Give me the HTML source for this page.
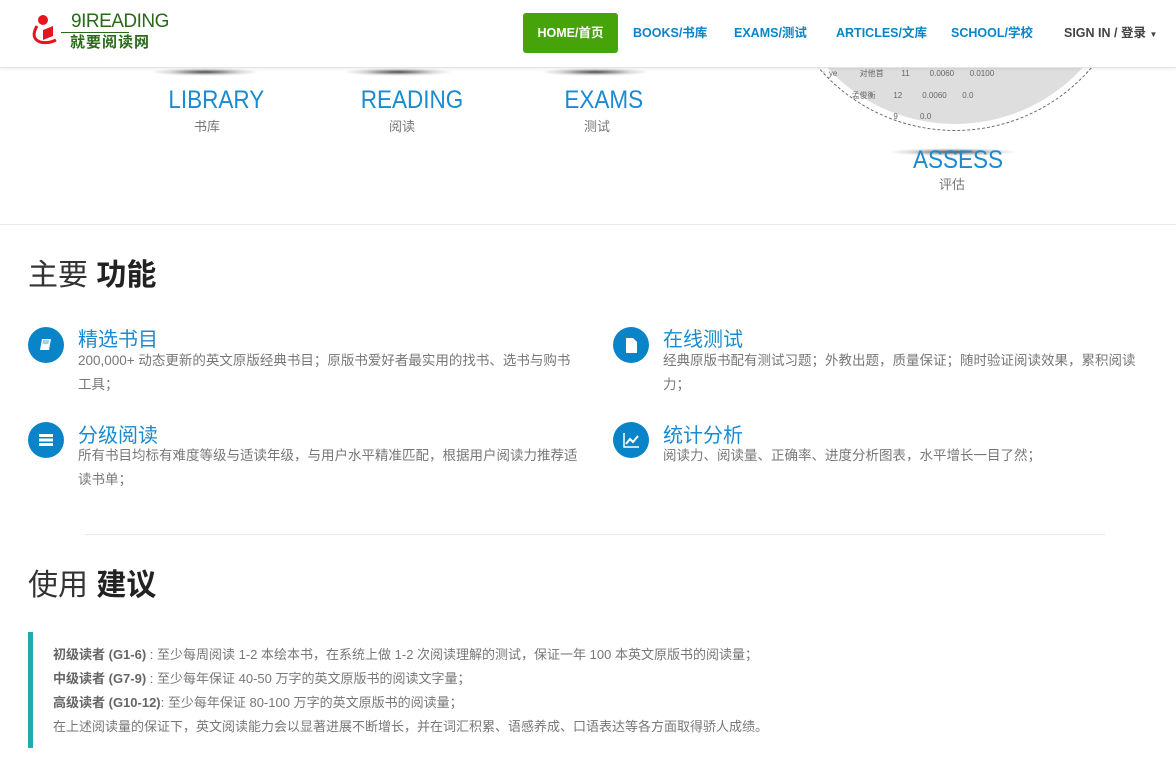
<!DOCTYPE html>
<html><head><meta charset="utf-8"><style>
*{margin:0;padding:0;box-sizing:border-box}
body{width:1176px;height:779px;overflow:hidden;background:#fff;font-family:"Liberation Sans","Noto Sans CJK SC",sans-serif;color:#666;position:relative}
.nav{position:absolute;top:0;left:0;width:1176px;height:68px;background:#fff;border-bottom:1px solid #e4e4e4;box-shadow:0 1px 3px rgba(0,0,0,.08);z-index:5}
.nav a{position:absolute;top:13px;height:40px;line-height:40px;font-size:12.5px;font-weight:bold;color:#0a84c8;text-decoration:none}
.hand{position:absolute;font-family:"Liberation Sans Narrow","Liberation Sans",sans-serif;color:#1a8bd0;font-size:25px;font-weight:normal;transform:scaleX(.9);transform-origin:center}
.sub{position:absolute;font-size:13px;color:#777;width:80px;text-align:center}
.shadow{position:absolute;height:8px;border-radius:50%;background:radial-gradient(ellipse at center,rgba(0,0,0,.7) 0%,rgba(0,0,0,.15) 45%,rgba(0,0,0,0) 70%)}
h2{position:absolute;left:28px;font-size:30px;font-weight:normal;color:#333}
h2 b{color:#222}
.ic{position:absolute;width:36px;height:36px;border-radius:50%;background:#0a84c8}
.ft{position:absolute;font-size:20px;color:#1a8bd0}
.fd{position:absolute;font-size:13.5px;line-height:24px;color:#777}
</style></head><body>
<div class="nav">
 <svg style="position:absolute;left:30px;top:14px" width="30" height="34" viewBox="0 0 30 34"><circle cx="13" cy="6" r="5" fill="#e8141c"/><path d="M7 12 Q0 24 10 28 Q18 30 26 26" stroke="#e8141c" stroke-width="3" fill="none"/><path d="M13 16 L23 12 L23 22 L13 26Z" fill="#e8141c"/></svg>
 <div style="position:absolute;left:71px;top:11px;font-family:'Liberation Sans Narrow','Liberation Sans',sans-serif;font-size:19px;color:#2a6a1a;letter-spacing:-0.5px">9IREADING</div>
 <div style="position:absolute;left:61px;top:32px;width:68px;border-top:1px solid #2a6a1a"></div>
 <div style="position:absolute;left:70px;top:31px;font-size:15px;font-weight:bold;color:#2a6a1a;letter-spacing:1px">就要阅读网</div>
 <a style="left:523px;width:95px;background:#46a30a;color:#fff;border-radius:3px;text-align:center">HOME/首页</a>
 <a style="left:633px">BOOKS/书库</a>
 <a style="left:734px">EXAMS/测试</a>
 <a style="left:836px">ARTICLES/文库</a>
 <a style="left:951px">SCHOOL/学校</a>
 <a style="left:1064px;color:#444">SIGN IN / 登录 <span style="font-size:8px">▼</span></a>
</div>
<div style="position:absolute;left:775px;top:-229px;width:360px;height:360px;border-radius:50%;border:1px dashed #666;overflow:hidden">
 <div style="position:absolute;left:6px;top:6px;width:346px;height:346px;border-radius:50%;background:#dedede"></div>
 <div style="position:absolute;left:40px;top:296px;font-size:8px;color:#666;white-space:pre">dy_ye          对他首        11         0.0060       0.0100</div>
 <div style="position:absolute;left:40px;top:318px;font-size:8px;color:#666;white-space:pre">                孟俊衡        12         0.0060       0.0</div>
 <div style="position:absolute;left:40px;top:339px;font-size:8px;color:#666;white-space:pre">                陈加府        9          0.0</div>
</div>
<div class="shadow" style="left:150px;top:68px;width:110px"></div>
<div class="shadow" style="left:343px;top:68px;width:110px"></div>
<div class="shadow" style="left:540px;top:68px;width:110px"></div>
<div class="shadow" style="left:888px;top:148px;width:130px"></div>
<div class="hand" style="left:163px;top:86px">LIBRARY</div>
<div class="sub" style="left:167px;top:116px">书库</div>
<div class="hand" style="left:355px;top:86px">READING</div>
<div class="sub" style="left:362px;top:116px">阅读</div>
<div class="hand" style="left:560px;top:86px">EXAMS</div>
<div class="sub" style="left:557px;top:116px">测试</div>
<div class="hand" style="left:908px;top:146px">ASSESS</div>
<div class="sub" style="left:912px;top:174px">评估</div>
<div style="position:absolute;left:0;top:224px;width:1176px;border-top:1px solid #e8e8e8"></div>
<h2 style="top:250px">主要 <b>功能</b></h2>
<div class="ic" style="left:28px;top:327px"><svg width="36" height="36"><path d="M14 12h9l-2 11h-9z" fill="#fff"/><path d="M15 14h6M14.5 16h6" stroke="#0a84c8" stroke-width=".8"/></svg></div>
<div class="ft" style="left:78px;top:323px">精选书目</div>
<div class="fd" style="left:78px;top:349px;width:505px">200,000+ 动态更新的英文原版经典书目；原版书爱好者最实用的找书、选书与购书工具；</div>
<div class="ic" style="left:28px;top:422px"><svg width="36" height="36"><rect x="11" y="12" width="14" height="3" fill="#fff"/><rect x="11" y="16.5" width="14" height="3" fill="#fff"/><rect x="11" y="21" width="14" height="3" fill="#fff"/></svg></div>
<div class="ft" style="left:78px;top:419px">分级阅读</div>
<div class="fd" style="left:78px;top:444px;width:505px">所有书目均标有难度等级与适读年级，与用户水平精准匹配，根据用户阅读力推荐适读书单；</div>
<div class="ic" style="left:613px;top:327px"><svg width="36" height="36"><path d="M13 11h7l4 4v11h-11z" fill="#fff"/></svg></div>
<div class="ft" style="left:663px;top:323px">在线测试</div>
<div class="fd" style="left:663px;top:349px;width:492px">经典原版书配有测试习题；外教出题，质量保证；随时验证阅读效果，累积阅读力；</div>
<div class="ic" style="left:613px;top:422px"><svg width="36" height="36"><path d="M11 11v14h15" stroke="#fff" stroke-width="1.5" fill="none"/><path d="M13 22l4-5 3 3 5-6" stroke="#fff" stroke-width="2" fill="none"/></svg></div>
<div class="ft" style="left:663px;top:419px">统计分析</div>
<div class="fd" style="left:663px;top:444px;width:500px">阅读力、阅读量、正确率、进度分析图表，水平增长一目了然；</div>
<div style="position:absolute;left:85px;top:534px;width:1020px;border-top:1px solid #e8e8e8"></div>
<h2 style="top:560px">使用 <b>建议</b></h2>
<div style="position:absolute;left:28px;top:632px;width:5px;height:116px;background:#23a9b1"></div>
<div style="position:absolute;left:53px;top:643px;font-size:13px;line-height:24px;color:#777">
<b style="color:#666">初级读者 (G1-6)</b> : 至少每周阅读 1-2 本绘本书，在系统上做 1-2 次阅读理解的测试，保证一年 100 本英文原版书的阅读量；<br>
<b style="color:#666">中级读者 (G7-9)</b> : 至少每年保证 40-50 万字的英文原版书的阅读文字量；<br>
<b style="color:#666">高级读者 (G10-12)</b>: 至少每年保证 80-100 万字的英文原版书的阅读量；<br>
在上述阅读量的保证下，英文阅读能力会以显著进展不断增长，并在词汇积累、语感养成、口语表达等各方面取得骄人成绩。
</div>
</body></html>
